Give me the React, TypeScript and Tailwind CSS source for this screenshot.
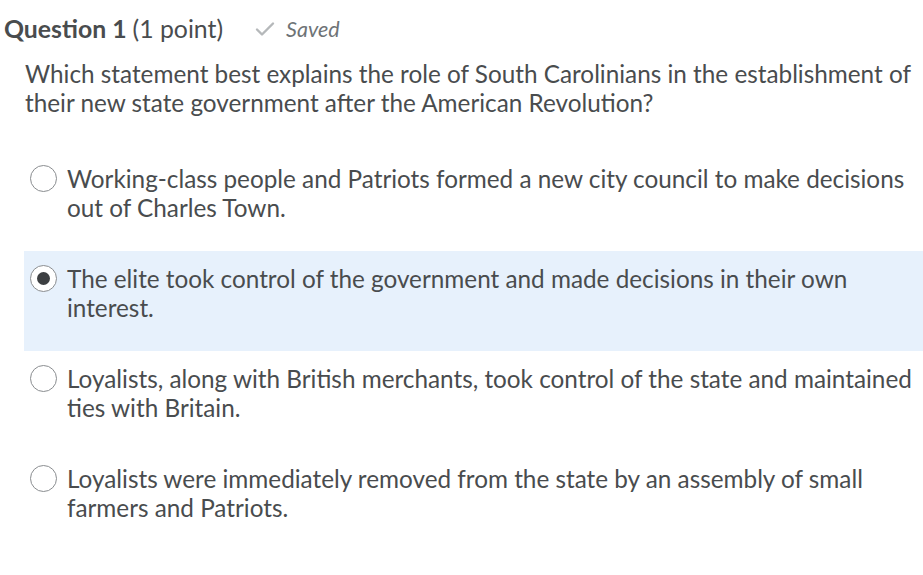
import React from "react";

const options = [
  "Working-class people and Patriots formed a new city council to make decisions out of Charles Town.",
  "The elite took control of the government and made decisions in their own interest.",
  "Loyalists, along with British merchants, took control of the state and maintained ties with Britain.",
  "Loyalists were immediately removed from the state by an assembly of small farmers and Patriots.",
];

function Radio({ checked }: { checked: boolean }) {
  return (
    <span className="mt-[1px] flex size-[27px] shrink-0 items-center justify-center rounded-full border border-[#8a8d90] bg-white">
      {checked && <span className="size-[13px] rounded-full bg-[#3c3f42]" />}
    </span>
  );
}

export default function App() {
  const selected = 1;
  return (
    <div
      className="min-h-[575px] w-[923px] overflow-hidden bg-white text-[#494c4e]"
      style={{ fontFamily: "Lato, 'Noto Sans', sans-serif" }}
    >
      <div className="flex items-center pl-[4px] pt-[14px] text-[24.8px] leading-[30px]">
        <span className="font-bold">Question 1</span>
        <span className="ml-[6px]">(1 point)</span>
        <span className="ml-[32px] flex items-center gap-[11px] text-[21.5px] italic text-[#6e7376]">
          <svg width="20" height="16" viewBox="0 0 20 16" fill="none">
            <path d="M2 8.5l5 5L18 2.5" stroke="#b5b8ba" strokeWidth="2.4" strokeLinecap="round" strokeLinejoin="round" />
          </svg>
          Saved
        </span>
      </div>
      <p className="mt-[15px] pl-[25px] pr-[6px] text-[24.3px] leading-[29px]">
        Which statement best explains the role of South Carolinians in the establishment of their new state government after the American Revolution?
      </p>
      <div className="mt-[34px] ml-[24px]">
        {options.map((o, i) => (
          <div
            key={i}
            className={`flex h-[100px] items-start gap-[10px] pl-[6px] pr-[6px] pt-[13px] ${
              i === selected ? "bg-[#e7f1fc]" : ""
            }`}
          >
            <Radio checked={i === selected} />
            <span className="text-[24.3px] leading-[29px]">{o}</span>
          </div>
        ))}
      </div>
    </div>
  );
}
